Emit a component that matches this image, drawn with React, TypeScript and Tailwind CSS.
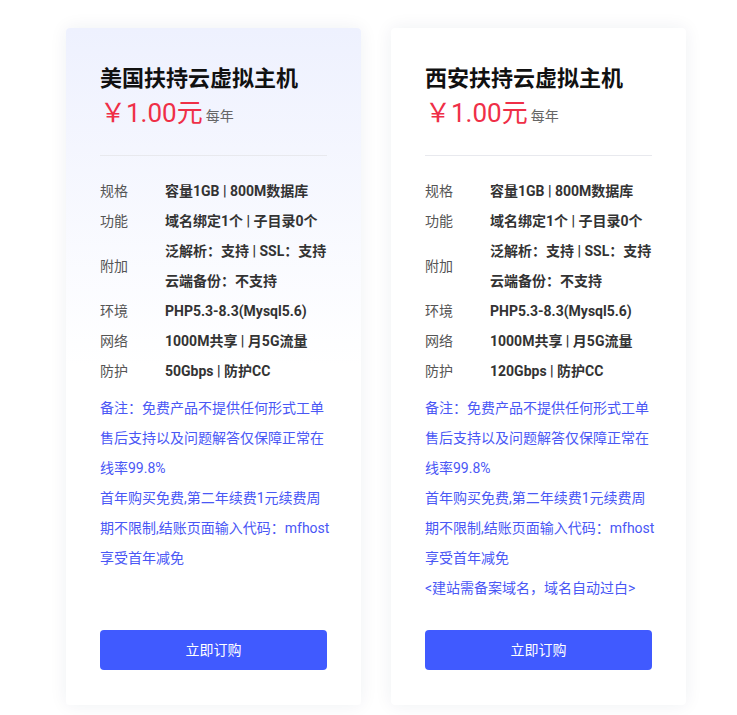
import React from "react";

type Spec = { label: string; lines: string[] };

const font = { fontFamily: 'Roboto, "Noto Sans CJK SC", "Noto Sans", sans-serif' };

function Card({
  title,
  specs,
  notes,
  gradient,
}: {
  title: string;
  specs: Spec[];
  notes: string[];
  gradient?: boolean;
}) {
  return (
    <div
      className={
        "flex w-[295px] flex-col rounded-[4px] px-[34px] pt-[36px] pb-[35px] shadow-[0_0_18px_rgba(30,40,90,0.07)] " +
        (gradient ? "bg-gradient-to-b from-[#eef1fe] via-white to-white" : "bg-white")
      }
    >
      <div className="text-[22px] font-bold leading-[30px] text-[#111]">{title}</div>
      <div className="mt-[4px] flex items-end leading-none">
        <span className="text-[26px] leading-[30px] text-[#ef2f47]">￥1.00元</span>
        <span className="ml-[3px] mb-[3px] text-[14px] leading-[18px] text-[#666]">每年</span>
      </div>
      <div className="mt-[27px] h-px w-full bg-[#e8e9ee]" />
      <div className="mt-[20px] flex flex-col">
        {specs.map((s) => (
          <div key={s.label} className="flex items-center">
            <div className="w-[65px] shrink-0 text-[14px] leading-[30px] text-[#555]">{s.label}</div>
            <div className="flex flex-col">
              {s.lines.map((l) => (
                <div key={l} className="text-[14px] font-bold leading-[30px] text-[#333]">
                  {l}
                </div>
              ))}
            </div>
          </div>
        ))}
      </div>
      <div className="mt-[7px] mb-[27px] flex flex-col">
        {notes.map((n, i) => (
          <div key={i} className="whitespace-nowrap text-[14px] leading-[30px] text-[#4a57f5]">
            {n}
          </div>
        ))}
      </div>
      <button className="mt-auto h-[40px] w-full rounded-[4px] bg-[#405aff] text-[14px] text-white">
        立即订购
      </button>
    </div>
  );
}

const baseNotes = [
  "备注：免费产品不提供任何形式工单",
  "售后支持以及问题解答仅保障正常在",
  "线率99.8%",
  "首年购买免费,第二年续费1元续费周",
  "期不限制,结账页面输入代码：mfhost",
  "享受首年减免",
];

export default function App() {
  const specs1: Spec[] = [
    { label: "规格", lines: ["容量1GB | 800M数据库"] },
    { label: "功能", lines: ["域名绑定1个 | 子目录0个"] },
    { label: "附加", lines: ["泛解析：支持 | SSL：支持", "云端备份：不支持"] },
    { label: "环境", lines: ["PHP5.3-8.3(Mysql5.6)"] },
    { label: "网络", lines: ["1000M共享 | 月5G流量"] },
    { label: "防护", lines: ["50Gbps | 防护CC"] },
  ];
  const specs2: Spec[] = specs1.map((s) =>
    s.label === "防护" ? { label: "防护", lines: ["120Gbps | 防护CC"] } : s
  );
  return (
    <div className="min-h-[715px] w-[737px] bg-white" style={font}>
      <div className="flex items-stretch gap-[30px] pt-[28px] pl-[66px]">
        <Card title="美国扶持云虚拟主机" specs={specs1} notes={baseNotes} gradient />
        <Card
          title="西安扶持云虚拟主机"
          specs={specs2}
          notes={[...baseNotes, "<建站需备案域名，域名自动过白>"]}
        />
      </div>
    </div>
  );
}
